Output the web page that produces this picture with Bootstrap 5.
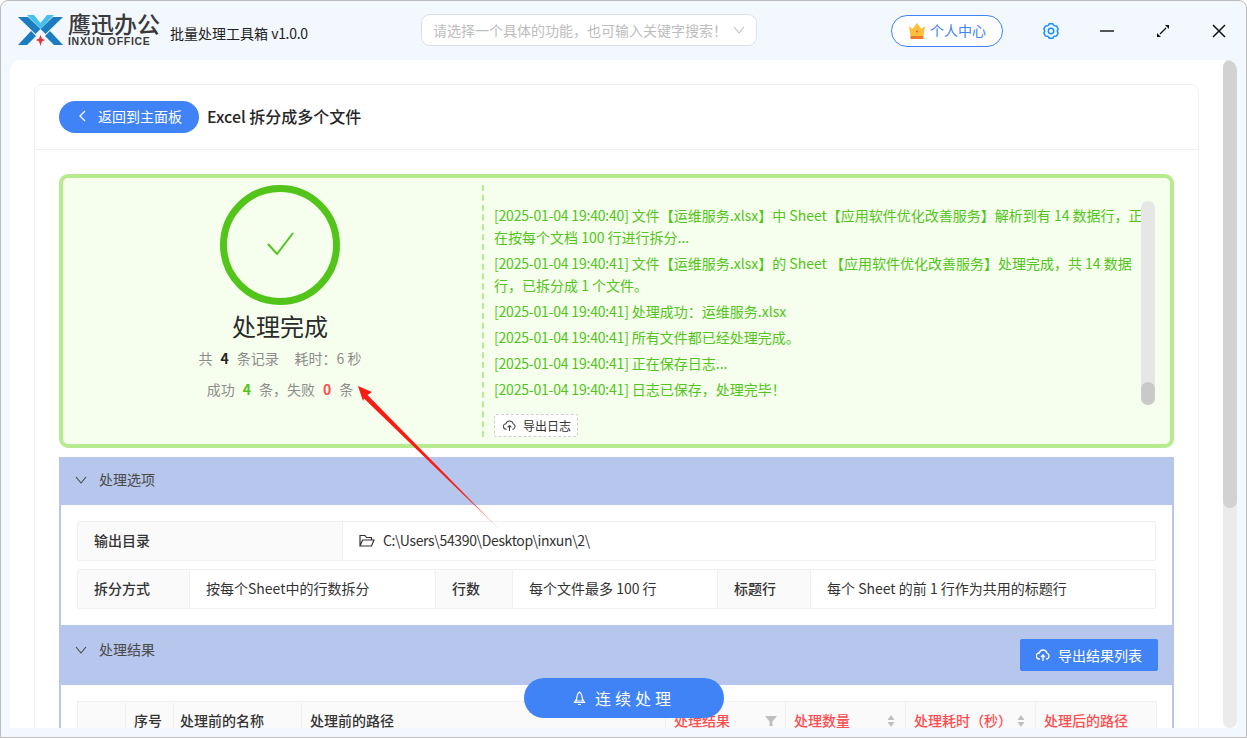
<!DOCTYPE html>
<html lang="zh-CN">
<head>
<meta charset="utf-8">
<title>批量处理工具箱</title>
<link href="https://cdn.jsdelivr.net/npm/bootstrap@5.3.0/dist/css/bootstrap.min.css" rel="stylesheet">
<style>
html,body{height:100%;margin:0;overflow:hidden;background:#fff}
body{font-family:"Noto Sans CJK SC","Liberation Sans",sans-serif;color:#333;font-size:14px}
.appwin{height:738px;background:#f3f7fe;border:1px solid #bcbcbc;border-radius:8px 8px 0 0;overflow:hidden;position:relative}
.topbar{height:59px;padding-left:17px}
.logo-mark{width:45px;height:32px;flex:none}
.logo-words{width:94px;margin-left:5px;margin-top:-4px}
.logo-cn{font-size:23px;line-height:23px;font-weight:500;color:#3a3a3a;white-space:nowrap}
.logo-en{font-family:"Liberation Sans",sans-serif;font-size:10.5px;line-height:9px;font-weight:700;color:#3a3a3a;letter-spacing:.7px;white-space:nowrap;margin-top:2px}
.app-name{margin-left:8px;margin-top:6px;width:251px;color:#222;white-space:nowrap}
.ver-tag{letter-spacing:-.3px}
.search-box{width:336px;height:32px;background:#fff;border:1px solid #dcdfe6;border-radius:9px;padding:0 11px;font-size:14px;color:#bdbdbd;margin-top:-1px}
.user-pill{width:112px;height:32px;margin-left:134px;border:1px solid #4083f7;border-radius:16px;background:#fff;color:#4083f7;font-size:14px;gap:4px;padding:0}
.win-ctl{width:18px;height:18px;flex:none}
.sheet{height:668px;margin:0 9px 0 9px;background:#fff;border-radius:10px 10px 0 0;overflow:hidden}
.sheet-main{width:1213px;padding:24px 0 0 24px;flex:none}
.panel{width:1165px;border:1px solid #eef0f4;border-radius:8px;background:#fff}
.panel-head{height:65px;border-bottom:1px solid #eef0f4;padding:16px 0 0 24px}
.back-btn{width:140px;height:32px;background:#4083f7;border:0;border-radius:16px;color:#fff;font-size:14px;padding:0 0 2px 19px;gap:11px}
.back-btn:hover{background:#4083f7;color:#fff}
.panel-title{font-size:16px;font-weight:500;color:#262626;margin-left:8px;line-height:30px}
.panel-body{padding:24px 24px 0}
.result-box{height:274px;background:#f6ffed;border:4px solid #b7eb8f;border-radius:9px}
.result-left{width:419px;flex:none;padding:7px 0 0 15px}
.ring{width:120px;height:120px;display:block}
.done-title{font-size:24px;line-height:34px;color:#2b2b2b;margin-top:4px}
.stat-line{font-size:14px;line-height:20px;color:#8c8c8c;white-space:pre}
.stat-line b{font-weight:700;color:#262626;margin:0 8px}
.stat-line b.okk{color:#52c41a}.stat-line b.bad{color:#ff4d4f}
.gap-first{margin-top:5px}
.gap-second{margin-top:11px}
.log-side{flex:1;min-width:0;border-left:2px dashed #b7eb8f;margin:7px 0 7px 0;padding-left:10px;position:relative}
.log-lines{width:649px;padding-top:19px;color:#52c41a;font-size:14px;line-height:22px}
.log-lines p{margin:0 0 4px}
.stamp{letter-spacing:-.2px}
.log-track{position:absolute;left:657px;top:16px;width:14px;height:204px;background:#e6e6e6;border-radius:7px}
.log-thumb{position:absolute;left:0;bottom:0;width:14px;height:23px;background:#c9c9c9;border-radius:7px}
.export-log{width:84px;height:23px;margin-top:14px;background:#fff;border:1px dashed #d0d0d0;border-radius:2px;font-size:12px;color:#333;gap:7px;padding:0 0 0 8px}
.sect-bar{background:#b6c6ec;padding-left:16px;color:#4a4a4a;font-size:14px}
.sect-one{height:48px;margin-top:9px;padding-bottom:3px}
.sect-two{height:60px;padding-right:16px}
.sect-label{margin-left:12px}
.export-list{width:138px;height:32px;background:#4083f7;border:0;border-radius:2px;color:#fff;font-size:14px;padding:0;gap:8px;margin-top:14px}
.export-list:hover{background:#4083f7;color:#fff}
.sect-body{border-left:2px solid #b6c6ec;border-right:2px solid #b6c6ec;background:#fff;padding:16px 16px 0}
.sect-body-a{height:120px}
.info-row{height:40px;border:1px solid #f0f0f0;border-radius:2px;margin-bottom:8px}
.info-key{background:#fafafa;font-weight:500;color:#333;padding:0 0 2px 16px;border-right:1px solid #f0f0f0;flex:none}
.info-val{padding:0 0 2px 16px;color:#333;border-right:1px solid #f0f0f0;flex:none}
.info-val:last-child{border-right:0;flex:1}
.path-text{letter-spacing:-.35px}
.k1{width:265px}.k2{width:112px}.v2{width:246px}.k3{width:77px}.v3{width:205px}.k4{width:93px}
.res-table{table-layout:fixed;width:1080px;margin:0;border:1px solid #f0f0f0;font-size:14px}
.res-table th{background:#fafafa;border-right:1px solid #f0f0f0;border-bottom:0;padding:8px 8px 10px;font-weight:500;color:#333;line-height:20px;position:relative;white-space:nowrap;box-shadow:none}
.res-table th.hot{color:#ff4d4f}
.res-table th.tight{padding-left:6px}
.mark-ico{position:absolute;right:8px;top:13px;width:12px;height:12px}
.fake-scroll{width:14px;height:668px;background:#ebebeb;border-radius:7px;margin-left:0;position:relative;flex:none}
.fake-thumb{position:absolute;left:0;top:0;width:14px;height:448px;background:#d2d2d2;border-radius:7px}
.float-go{position:absolute;left:523px;top:677px;width:200px;height:40px;border:0;border-radius:20px;background:#4083f7;color:#fff;font-size:16px;letter-spacing:4px;gap:9px;padding:0}
.float-go:hover{background:#4083f7;color:#fff}
.note-arrow{position:absolute;left:-1px;top:-1px;width:1247px;height:738px;pointer-events:none}
</style>
</head>
<body>
<div class="appwin">
  <div class="topbar d-flex align-items-center">
    <svg class="logo-mark" viewBox="0 0 45 32">
      <path d="M0 2h10l12.500 12-5 5z" fill="#1b7dc0"/>
      <path d="M45 2H35L22.500 14l5 5z" fill="#1b7dc0"/>
      <path d="M9 0h7l6.500 8L29 0h7L22.500 14z" fill="#45c0ea"/>
      <path d="M0 30h9l9-9-5-5z" fill="#1b7dc0"/>
      <path d="M45 30h-9l-9-9 5-5z" fill="#1b7dc0"/>
      <path d="M22.500 20l1.400 3.600 3.100 1.400-3.100 1.400-1.400 4.600-1.400-4.600L18 25l3.100-1.400z" fill="#e8323c"/>
    </svg>
    <div class="logo-words">
      <div class="logo-cn">鹰迅办公</div>
      <div class="logo-en">INXUN OFFICE</div>
    </div>
    <div class="app-name">批量处理工具箱 <span class="ver-tag">v1.0.0</span></div>
    <div class="search-box d-flex align-items-center justify-content-between">
      <span>请选择一个具体的功能，也可输入关键字搜索！</span>
      <svg width="12" height="8" viewBox="0 0 12 8" fill="none" stroke="#bdbdbd" stroke-width="1.100"><path d="M1 1l5 6 5-6"/></svg>
    </div>
    <button class="user-pill btn d-flex align-items-center justify-content-center">
      <svg width="18" height="18" viewBox="0 0 18 18"><path d="M1 4l3.500 3L9 1l4.500 6L17 4l-1.500 10h-13z" fill="#fbbf3c"/><path d="M2.500 14h13v3h-13z" fill="#ef7b2c"/><circle cx="9" cy="9.500" r="1" fill="#e8603c"/></svg>
      <span>个人中心</span>
    </button>
    <svg class="win-ctl" style="margin-left:39px" viewBox="0 0 24 24" fill="none" stroke="#1890ff" stroke-width="2" stroke-linejoin="round"><path d="M14.250 2.260L9.750 2.260 7.900 4.900 4.690 5.180 2.440 9.080 3.800 12 2.440 14.920 4.690 18.820 7.900 19.100 9.750 21.740 14.250 21.740 16.100 19.100 19.310 18.820 21.560 14.920 20.200 12 21.560 9.080 19.310 5.180 16.100 4.900z"/><circle cx="12" cy="12" r="3.600"/></svg>
    <svg class="win-ctl" style="margin-left:38px" viewBox="0 0 18 18" stroke="#555" stroke-width="2"><path d="M2 9h14"/></svg>
    <svg class="win-ctl" style="margin-left:38px" viewBox="0 0 18 18" stroke="#111" stroke-width="1.300" fill="#111"><path d="M6 12l6-6" fill="none"/><path d="M3 15v-4l4 4zM15 3v4l-4-4z" stroke="none"/></svg>
    <svg class="win-ctl" style="margin-left:38px" viewBox="0 0 18 18" stroke="#111" stroke-width="1.500"><path d="M3 3l12 12M15 3L3 15"/></svg>
  </div>

  <div class="sheet d-flex">
    <div class="sheet-main">
      <div class="panel">
        <div class="panel-head d-flex">
          <button class="back-btn btn d-flex align-items-center">
            <svg width="9" height="12" viewBox="0 0 9 12" fill="none" stroke="#fff" stroke-width="1.300"><path d="M7 1L2 6l5 5"/></svg>
            <span>返回到主面板</span>
          </button>
          <div class="panel-title">Excel 拆分成多个文件</div>
        </div>
        <div class="panel-body">
          <div class="result-box d-flex">
            <div class="result-left d-flex flex-column align-items-center">
              <svg class="ring" viewBox="0 0 120 120" fill="none" stroke="#52c41a"><circle cx="60" cy="60" r="56.500" stroke-width="7"/><path d="M48 59l9 10 16-21" stroke-width="2"/></svg>
              <div class="done-title">处理完成</div>
              <div class="stat-line gap-first">共<b>4</b>条记录     耗时：6 秒</div>
              <div class="stat-line gap-second">成功<b class="okk">4</b>条，失败<b class="bad">0</b>条</div>
            </div>
            <div class="log-side">
              <div class="log-lines">
                <p><span class="stamp">[2025-01-04 19:40:40]</span> 文件【运维服务.xlsx】中 Sheet【应用软件优化改善服务】解析到有 14 数据行，正在按每个文档 100 行进行拆分...</p>
                <p><span class="stamp">[2025-01-04 19:40:41]</span> 文件【运维服务.xlsx】的 Sheet 【应用软件优化改善服务】处理完成，共 14 数据行，已拆分成 1 个文件。</p>
                <p><span class="stamp">[2025-01-04 19:40:41]</span> 处理成功：运维服务.xlsx</p>
                <p><span class="stamp">[2025-01-04 19:40:41]</span> 所有文件都已经处理完成。</p>
                <p><span class="stamp">[2025-01-04 19:40:41]</span> 正在保存日志...</p>
                <p><span class="stamp">[2025-01-04 19:40:41]</span> 日志已保存，处理完毕！</p>
              </div>
              <div class="log-track"><div class="log-thumb"></div></div>
              <button class="export-log btn d-flex align-items-center">
                <svg width="13" height="12" viewBox="0 0 14 13" fill="none" stroke="#444" stroke-width="1.100"><path d="M4 10H3.500a3 3 0 0 1-.3-6A4 4 0 0 1 11 4.200 3 3 0 0 1 10.500 10H10"/><path d="M7 12V6M5 8l2-2 2 2"/></svg>
                <span>导出日志</span>
              </button>
            </div>
          </div>

          <div class="sect-bar sect-one d-flex align-items-center">
            <svg width="12" height="8" viewBox="0 0 12 8" fill="none" stroke="#444" stroke-width="1.100"><path d="M1 1l5 6 5-6"/></svg>
            <span class="sect-label">处理选项</span>
          </div>
          <div class="sect-body sect-body-a">
            <div class="info-row d-flex align-items-stretch">
              <div class="info-key k1 d-flex align-items-center">输出目录</div>
              <div class="info-val d-flex align-items-center gap-2">
                <svg width="16" height="13" viewBox="0 0 16 13" fill="none" stroke="#333" stroke-width="1.200"><path d="M1 12V1.500h5l1.500 2h5V6M1 12h11.500L15 6H3.500z"/></svg>
                <span class="path-text">C:\Users\54390\Desktop\inxun\2\</span>
              </div>
            </div>
            <div class="info-row d-flex align-items-stretch">
              <div class="info-key k2 d-flex align-items-center">拆分方式</div>
              <div class="info-val v2 d-flex align-items-center">按每个Sheet中的行数拆分</div>
              <div class="info-key k3 d-flex align-items-center">行数</div>
              <div class="info-val v3 d-flex align-items-center">每个文件最多 100 行</div>
              <div class="info-key k4 d-flex align-items-center">标题行</div>
              <div class="info-val d-flex align-items-center">每个 Sheet 的前 1 行作为共用的标题行</div>
            </div>
          </div>

          <div class="sect-bar sect-two d-flex align-items-start justify-content-between">
            <div class="d-flex align-items-center" style="height:49px">
              <svg width="12" height="8" viewBox="0 0 12 8" fill="none" stroke="#444" stroke-width="1.100"><path d="M1 1l5 6 5-6"/></svg>
              <span class="sect-label">处理结果</span>
            </div>
            <button class="export-list btn d-flex align-items-center justify-content-center">
              <svg width="14" height="13" viewBox="0 0 14 13" fill="none" stroke="#fff" stroke-width="1.300"><path d="M4 10H3.500a3 3 0 0 1-.3-6A4 4 0 0 1 11 4.200 3 3 0 0 1 10.500 10H10"/><path d="M7 12V6M5 8l2-2 2 2"/></svg>
              <span>导出结果列表</span>
            </button>
          </div>
          <div class="sect-body">
            <table class="table res-table">
              <colgroup><col style="width:48px"><col style="width:48px"><col style="width:128px"><col style="width:364px"><col style="width:120px"><col style="width:120px"><col style="width:130px"><col></colgroup>
              <thead><tr>
                <th></th><th>序号</th><th class="tight">处理前的名称</th><th>处理前的路径</th>
                <th class="hot">处理结果<svg class="mark-ico" viewBox="0 0 12 12" fill="#bfbfbf"><path d="M0 1h12L7.500 6.500V11h-3V6.500z"/></svg></th>
                <th class="hot">处理数量<svg class="mark-ico" viewBox="0 0 12 12" fill="#bfbfbf"><path d="M6 0l3.500 5h-7zM6 12L2.500 7h7z"/></svg></th>
                <th class="hot">处理耗时（秒）<svg class="mark-ico" viewBox="0 0 12 12" fill="#bfbfbf"><path d="M6 0l3.500 5h-7zM6 12L2.500 7h7z"/></svg></th>
                <th class="hot">处理后的路径</th>
              </tr></thead>
            </table>
          </div>
        </div>
      </div>
    </div>
    <div class="fake-scroll"><div class="fake-thumb"></div></div>
  </div>

  <button class="float-go btn d-flex align-items-center justify-content-center">
    <svg width="13" height="15" viewBox="0 0 13 15" fill="none" stroke="#fff" stroke-width="1.200"><path d="M6.500 1C4 3 3.500 6 3.500 10h6C9.500 6 9 3 6.500 1zM3.500 8L1.500 11.500h10L9.500 8M5 13.500h3"/></svg>
    <span>连续处理</span>
  </button>

  <svg class="note-arrow" viewBox="0 0 1247 738">
    <defs><linearGradient id="fadeTail" gradientUnits="userSpaceOnUse" x1="358" y1="386" x2="503" y2="533"><stop offset="0" stop-color="#fa1c14"/><stop offset=".72" stop-color="#fa1c14"/><stop offset="1" stop-color="#fa1c14" stop-opacity=".1"/></linearGradient></defs>
    <polygon points="358,386 372,392 367.500,395 503,533 364,398.500 363,401" fill="url(#fadeTail)"/>
  </svg>
</div>
<script src="https://cdn.jsdelivr.net/npm/bootstrap@5.3.0/dist/js/bootstrap.bundle.min.js"></script>
</body>
</html>
